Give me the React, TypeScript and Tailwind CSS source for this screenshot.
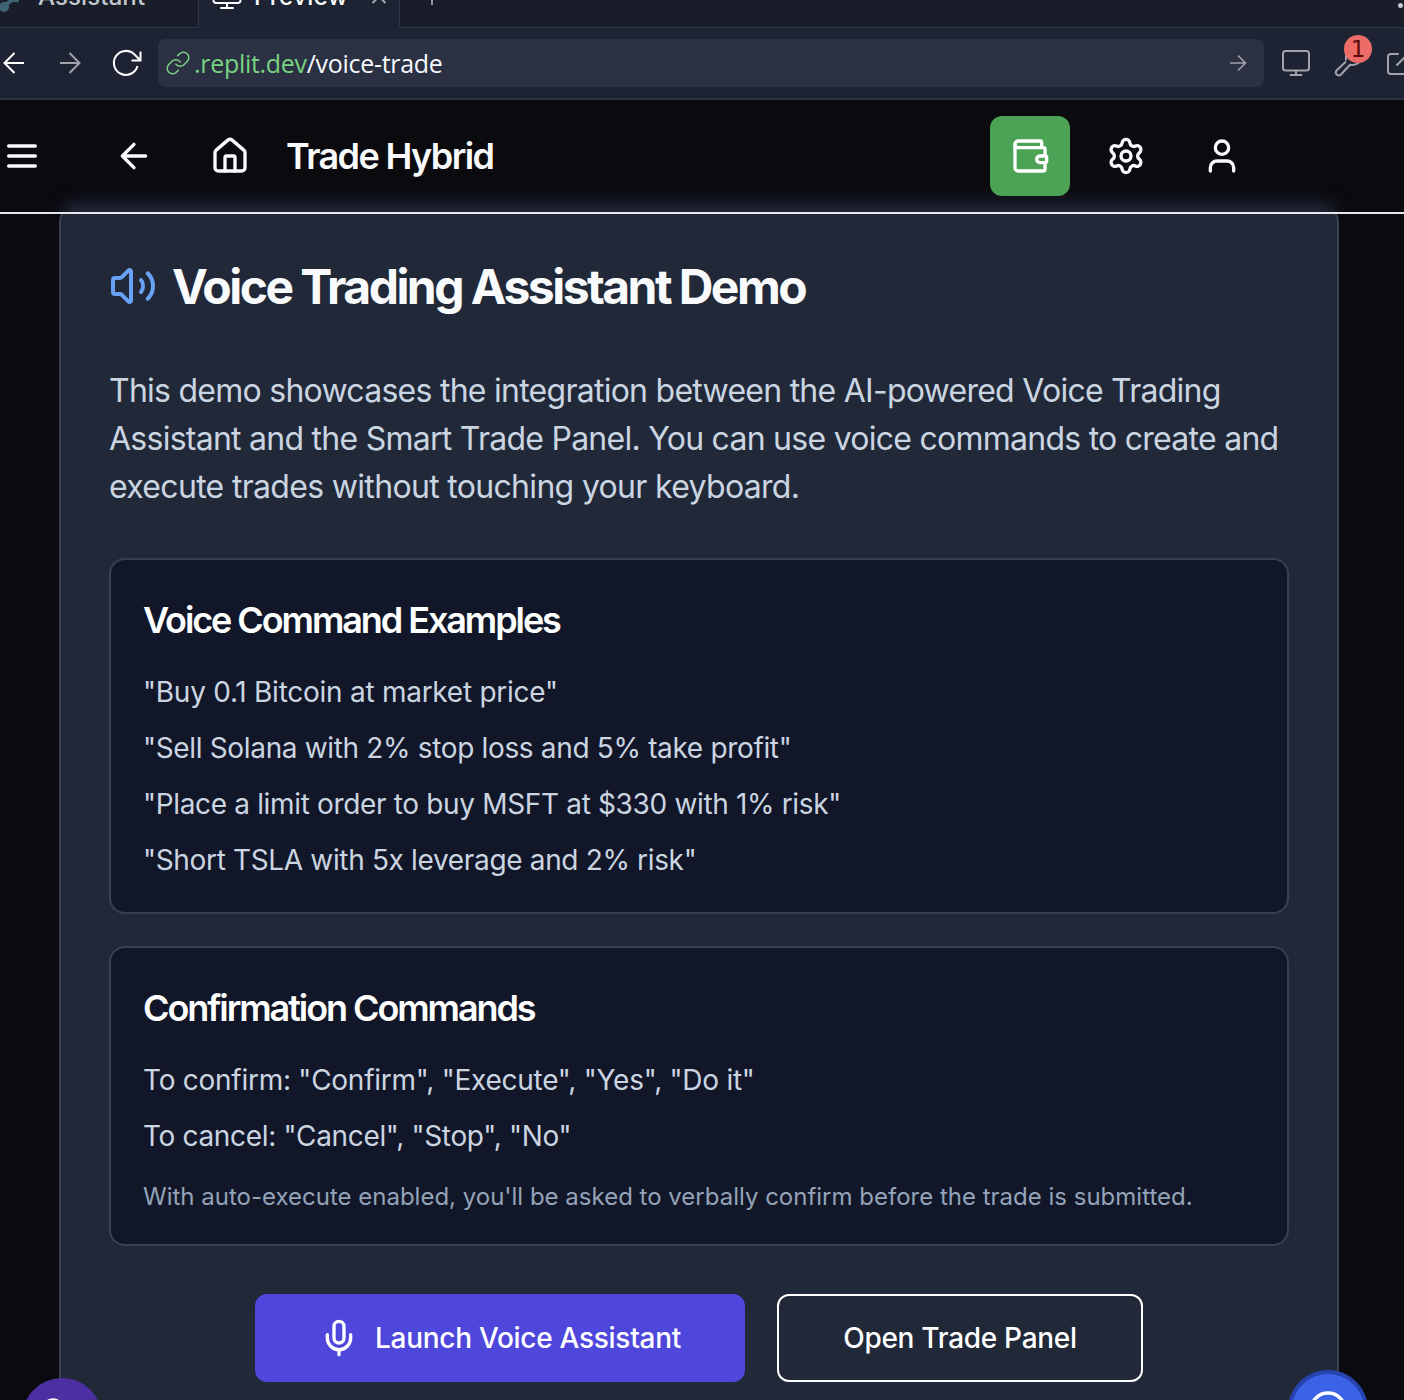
import React from "react";
import { Settings } from "lucide-react";

type IconProps = { size: number; className?: string; stroke?: number; children: React.ReactNode };

function Icon({ size, className = "", stroke = 2, children }: IconProps) {
  return (
    <svg width={size} height={size} viewBox="0 0 24 24" fill="none" stroke="currentColor" strokeWidth={stroke} strokeLinecap="round" strokeLinejoin="round" className={"shrink-0 " + className}>
      {children}
    </svg>
  );
}

function TabStrip() {
  return (
    <div className="relative flex h-7 overflow-hidden bg-[#181d29] text-[24px] font-medium">
      <div className="flex w-[199px] shrink-0 border-r border-b border-[#2b3245] text-[#c2c8cc]">
        <svg width="24" height="14" viewBox="0 0 24 14" className="shrink-0">
          <circle cx="4" cy="7" r="5" fill="#3d6475" />
          <path d="M4 6 L12 0 L19 0" stroke="#3d6475" strokeWidth="4" fill="none" />
        </svg>
        <span className="-mt-[19px] ml-[14px] h-8 leading-8 tracking-[0.1px]">Assistant</span>
      </div>
      <div className="flex w-[200px] shrink-0 bg-[#1e2333] text-white">
        <svg width="30" height="28" viewBox="0 0 30 28" fill="none" stroke="white" strokeWidth="2" className="ml-[13px] shrink-0">
          <path d="M1.500 -6v6.500a2.500 2.500 0 0 0 2.500 2.500h22a2.500 2.500 0 0 0 2.500 -2.500v-6.500M15 3v5M9 8h12" strokeLinecap="round" />
        </svg>
        <span className="-mt-[19px] ml-[12px] h-8 w-[104px] leading-8 tracking-[0.4px]">Preview</span>
        <svg width="16" height="8" viewBox="0 0 16 8" fill="none" stroke="#a4a8b0" strokeWidth="2" className="ml-[13px]">
          <path d="M1.500 3L8 -3.500L14.500 3" />
        </svg>
      </div>
      <div className="flex grow justify-between border-b border-l border-[#2b3245]">
        <div className="ml-[31px] h-[5px] w-[2px] bg-[#8d939e]" />
        <div className="mt-[3px] mr-px size-[5px] rounded-full bg-[#c2c8cc]" />
      </div>
    </div>
  );
}

function AddressBar() {
  return (
    <div className="flex h-[72px] items-center border-b-2 border-[#2b3245] bg-[#1e2333] text-[#a0a3a9]">
      <svg width="24" height="24" viewBox="0 0 24 24" fill="none" stroke="white" strokeWidth="2" className="ml-[2px] shrink-0">
        <path d="M12.500 2L2.500 12l10 10M2.500 12H22" />
      </svg>
      <svg width="24" height="24" viewBox="0 0 24 24" fill="none" stroke="currentColor" strokeWidth="2" className="ml-[32px] shrink-0">
        <path d="M11.500 2l10 10l-10 10M21.500 12H2" />
      </svg>
      <svg width="32" height="32" viewBox="0 0 32 32" fill="none" stroke="white" strokeWidth="2" className="ml-[29px] shrink-0">
        <path d="M26.500 19A12 12 0 1 1 23.500 7.500L29 13M29.500 4.500v9h-9" />
      </svg>
      <div className="ml-[15px] flex h-12 w-[1106px] shrink-0 items-center rounded-lg bg-[#2c3043]">
        <Icon size={26} stroke={1.4} className="ml-[7px] text-[#78d382]">
          <path d="M10 13a5 5 0 0 0 7.540.54l3-3a5 5 0 0 0-7.070-7.070l-1.720 1.710" />
          <path d="M14 11a5 5 0 0 0-7.540-.54l-3 3a5 5 0 0 0 7.070 7.070l1.710-1.710" />
        </Icon>
        <span className="ml-[3px] font-['Open_Sans'] text-[25px] leading-8 font-medium tracking-[-0.3px] whitespace-nowrap text-[#f5f9fc]">
          <span className="text-[#78d382]">.replit.dev</span>/voice-trade
        </span>
        <svg width="18" height="18" viewBox="0 0 18 18" fill="none" stroke="currentColor" strokeWidth="1.6" className="mr-[17px] ml-auto">
          <path d="M9 1.500l7.500 7.500L9 16.500M16 9H1" />
        </svg>
      </div>
      <svg width="30" height="30" viewBox="0 0 30 30" fill="none" stroke="currentColor" strokeWidth="2" strokeLinecap="round" className="ml-[17px] shrink-0">
        <rect x="2" y="3" width="26" height="19.500" rx="2.500" />
        <path d="M15 23v4M9.500 27h11" />
      </svg>
      <div className="relative ml-[22px] size-8 shrink-0">
        <svg width="32" height="32" viewBox="0 0 32 32" fill="none" stroke="currentColor" strokeWidth="2" strokeLinejoin="round">
          <path d="M13 13.500V8L20 2M26 15.500q-4 3.500-9 2.200L8 27.500q-2 2-4.200 0t0-4.200L13 14.500" />
        </svg>
        <span className="absolute -top-[12px] left-[11px] flex size-7 items-center justify-center rounded-full bg-[#ed6c67] font-['DejaVu_Sans'] text-[23px] leading-none text-[#5c0b08]">1</span>
      </div>
      <svg width="30" height="30" viewBox="0 0 30 30" fill="none" stroke="currentColor" strokeWidth="2" strokeLinecap="round" className="ml-[21px] -mr-5 shrink-0">
        <path d="M12 6H5a3 3 0 0 0-3 3v14a3 3 0 0 0 3 3h15M11 17L25 3" />
      </svg>
    </div>
  );
}

function AppHeader() {
  return (
    <header className="relative z-10 h-[114px] overflow-hidden border-b-2 border-[#e5e7eb] bg-[#0a0a0f] text-[#f9fafb]">
      <div className="absolute top-[103px] left-[64px] h-10 w-[1270px] bg-[#22293a] blur-[8px]" />
      <div className="relative flex h-full items-center">
        <Icon size={40} className="ml-[2px]"><path d="M4 6h16M4 12h16M4 18h16" /></Icon>
        <Icon size={40} className="ml-[72px]"><path d="m12 19-7-7 7-7M19 12H5" /></Icon>
        <Icon size={40} className="ml-[56px]">
          <path d="M15 21v-8a1 1 0 0 0-1-1h-4a1 1 0 0 0-1 1v8" />
          <path d="M3 10a2 2 0 0 1 .709-1.528l7-5.999a2 2 0 0 1 2.582 0l7 5.999A2 2 0 0 1 21 10v9a2 2 0 0 1-2 2H5a2 2 0 0 1-2-2z" />
        </Icon>
        <span className="ml-[36px] text-[36px] font-semibold tracking-[-1.6px] whitespace-nowrap">Trade Hybrid</span>
        <div className="mr-[162px] ml-auto flex items-center gap-14">
          <div className="-mr-5 flex size-20 items-center justify-center rounded-xl bg-[#4da355] text-white">
            <Icon size={40}>
              <path d="M19 7V4a1 1 0 0 0-1-1H5a2 2 0 0 0 0 4h15a1 1 0 0 1 1 1v4h-3a2 2 0 0 0 0 4h3a1 1 0 0 0 1-1v-2a1 1 0 0 0-1-1" />
              <path d="M3 5v14a2 2 0 0 0 2 2h15a1 1 0 0 0 1-1v-4" />
            </Icon>
          </div>
          <Settings size={40} className="shrink-0" />
          <Icon size={40}>
            <path d="M19 21v-2a4 4 0 0 0-4-4H9a4 4 0 0 0-4 4v2" />
            <circle cx="12" cy="7" r="4" />
          </Icon>
        </div>
      </div>
    </header>
  );
}

function CommandPanel({ title, commands, note }: { title: string; commands: string[]; note?: string }) {
  return (
    <section className="rounded-2xl border-2 border-[#374151] bg-[#111728] p-8">
      <h3 className="text-[36px] leading-[56px] font-semibold tracking-[-2.08px] text-white">{title}</h3>
      <ul className="mt-6 space-y-4 text-[28px] leading-10 tracking-[-0.34px] text-[#cbd5e1]">
        {commands.map((command) => <li key={command} className="first:tracking-[-0.26px]">{command}</li>)}
      </ul>
      {note && <p className="mt-[25px] -mb-px text-[24px] leading-8 whitespace-nowrap text-[#94a3b8]">{note}</p>}
    </section>
  );
}

export default function App() {
  return (
    <div className="relative h-[1400px] w-[1404px] overflow-hidden bg-[#0a0a0f] font-['Inter',sans-serif]">
      <TabStrip />
      <AddressBar />
      <AppHeader />
      <main className="-mt-2 ml-[59px] h-[1210px] w-[1280px] rounded-2xl border-2 border-[#374151] bg-[#212939] px-12 pt-12">
        <div className="flex h-[60px] items-center gap-4">
          <Icon size={48} className="text-[#68a2f6]">
            <path d="M11 4.702a.705.705 0 0 0-1.203-.498L6.413 7.587A1.400 1.400 0 0 1 5.416 8H3a1 1 0 0 0-1 1v6a1 1 0 0 0 1 1h2.416a1.400 1.400 0 0 1 .997.413l3.383 3.384A.705.705 0 0 0 11 19.298z" />
            <path d="M16 9a5 5 0 0 1 0 6" />
            <path d="M19.364 18.364a9 9 0 0 0 0-12.728" />
          </Icon>
          <h1 className="-ml-px pt-[2px] text-[48px] leading-[60px] font-bold tracking-[-2.55px] whitespace-nowrap text-[#f9fafb]">Voice Trading Assistant Demo</h1>
        </div>
        <p className="mt-[51px] text-[32px] leading-[48px] tracking-[-0.74px] whitespace-nowrap text-[#cbd5e1]">
          This demo showcases the integration between the AI-powered Voice Trading<br />
          Assistant and the Smart Trade Panel. You can use voice commands to create and<br />
          <span className="tracking-[-0.68px]">execute trades without touching your keyboard.</span>
        </p>
        <div className="mt-[47px] flex flex-col gap-8">
          <CommandPanel
            title="Voice Command Examples"
            commands={['"Buy 0.1 Bitcoin at market price"', '"Sell Solana with 2% stop loss and 5% take profit"', '"Place a limit order to buy MSFT at $330 with 1% risk"', '"Short TSLA with 5x leverage and 2% risk"']}
          />
          <CommandPanel
            title="Confirmation Commands"
            commands={['To confirm: "Confirm", "Execute", "Yes", "Do it"', 'To cancel: "Cancel", "Stop", "No"']}
            note="With auto-execute enabled, you'll be asked to verbally confirm before the trade is submitted."
          />
        </div>
        <div className="mt-12 flex justify-center gap-8 text-[28px] font-medium tracking-[-0.29px] text-white">
          <button className="flex h-[88px] w-[490px] items-center justify-center gap-4 rounded-xl bg-[#4f46dc]">
            <Icon size={40}>
              <rect x="9" y="2" width="6" height="13" rx="3" />
              <path d="M19 10v2a7 7 0 0 1-14 0v-2M12 19v3" />
            </Icon>
            <span className="whitespace-nowrap">Launch Voice Assistant</span>
          </button>
          <button className="h-[88px] w-[366px] rounded-xl border-2 border-white whitespace-nowrap">Open Trade Panel</button>
        </div>
      </main>
      <div className="absolute top-[1378px] left-[22px] size-20 rounded-full bg-[#4c2fa0]">
        <svg width="80" height="80" viewBox="0 0 80 80" fill="none" stroke="white" strokeWidth="3.300"><circle cx="31" cy="32" r="10" /></svg>
      </div>
      <div className="absolute top-[1370px] left-[1288px] size-20 rounded-full border-4 border-[#2743ae] bg-[#3a63e6]">
        <svg width="72" height="72" viewBox="0 0 72 72" fill="none" stroke="white" strokeWidth="3.500"><circle cx="36" cy="36" r="17" /></svg>
      </div>
    </div>
  );
}
